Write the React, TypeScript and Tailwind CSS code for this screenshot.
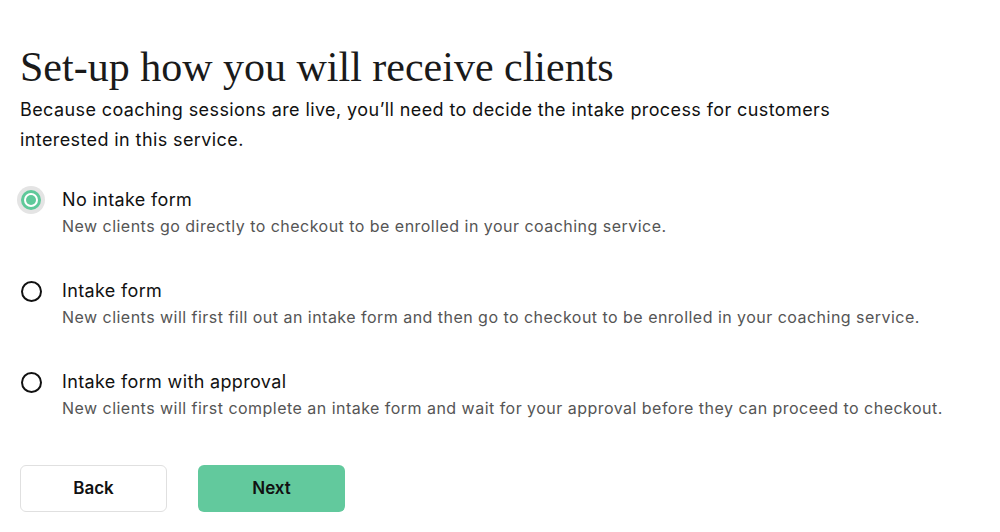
import { useState } from "react";

const options = [
  {
    id: "none",
    title: "No intake form",
    description: "New clients go directly to checkout to be enrolled in your coaching service.",
  },
  {
    id: "intake",
    title: "Intake form",
    description:
      "New clients will first fill out an intake form and then go to checkout to be enrolled in your coaching service.",
  },
  {
    id: "approval",
    title: "Intake form with approval",
    description:
      "New clients will first complete an intake form and wait for your approval before they can proceed to checkout.",
  },
];

export default function App() {
  const [selected, setSelected] = useState("none");

  return (
    <div className="min-h-screen bg-white px-5 pt-[43px] font-['Inter',Arial,sans-serif] text-[#111]">
      <h1 className="font-['Liberation_Serif','Times_New_Roman',serif] text-[42px] leading-[48px] font-normal text-[#1a1a1a]">
        Set-up how you will receive clients
      </h1>
      <p className="mt-[4px] max-w-[880px] text-[18px] leading-[30px] tracking-[0.4px] text-[#111]">
        Because coaching sessions are live, you’ll need to decide the intake process for customers interested in
        this service.
      </p>

      <div className="mt-[33px] flex flex-col gap-[42px]">
        {options.map((opt) => {
          const active = selected === opt.id;
          return (
            <label key={opt.id} className="flex cursor-pointer items-start gap-[20px]" onClick={() => setSelected(opt.id)}>
              <span className="relative mt-[1px] flex h-[22px] w-[22px] shrink-0 items-center justify-center">
                {active ? (
                  <>
                    <span className="absolute -inset-[3px] rounded-full bg-[#e4e4e4]" />
                    <span className="relative flex h-[20px] w-[20px] items-center justify-center rounded-full bg-[#5fc99a]">
                      <span className="flex h-[14px] w-[14px] items-center justify-center rounded-full bg-white">
                        <span className="h-[10px] w-[10px] rounded-full bg-[#5fc99a]" />
                      </span>
                    </span>
                  </>
                ) : (
                  <span className="h-[21px] w-[21px] rounded-full border-2 border-[#111]" />
                )}
              </span>
              <span className="flex flex-col">
                <span className="text-[18px] leading-[24px] tracking-[0.35px] text-[#111]">{opt.title}</span>
                <span className="mt-[3px] text-[16px] leading-[22px] tracking-[0.47px] text-[#555]">
                  {opt.description}
                </span>
              </span>
            </label>
          );
        })}
      </div>

      <div className="mt-[46px] flex gap-[31px]">
        <button className="h-[47px] w-[147px] rounded-md border border-[#e0e0e0] bg-white text-[17px] font-semibold text-[#111]">
          Back
        </button>
        <button className="h-[47px] w-[147px] rounded-md bg-[#62c99d] text-[17px] font-semibold text-[#111]">
          Next
        </button>
      </div>
    </div>
  );
}
